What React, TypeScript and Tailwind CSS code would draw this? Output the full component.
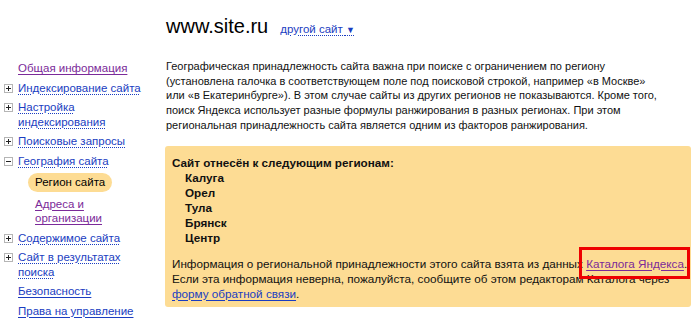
import React from "react";

type NavItem = {
  label: React.ReactNode;
  toggle?: "plus" | "minus";
  dotted?: boolean;
  visited?: boolean;
};

const nav: NavItem[] = [
  { label: "Общая информация", visited: true },
  { label: "Индексирование сайта", toggle: "plus", dotted: true },
  { label: <>Настройка<br />индексирования</>, toggle: "plus", dotted: true },
  { label: "Поисковые запросы", toggle: "plus", dotted: true },
  { label: "География сайта", toggle: "minus", dotted: true },
];

const navTail: NavItem[] = [
  { label: "Содержимое сайта", toggle: "plus", dotted: true },
  { label: <>Сайт в результатах<br />поиска</>, toggle: "plus", dotted: true },
  { label: "Безопасность" },
  { label: "Права на управление" },
];

const regions = ["Калуга", "Орел", "Тула", "Брянск", "Центр"];

const Toggle = ({ kind }: { kind: "plus" | "minus" }) => (
  <svg width="9" height="9" viewBox="0 0 9 9" className="shrink-0">
    <rect x="0.5" y="0.5" width="8" height="8" fill="#fff" stroke="#b5b5b5" />
    <path d="M2 4.5h5" stroke="#222" strokeWidth="1" />
    {kind === "plus" && <path d="M4.5 2v5" stroke="#222" strokeWidth="1" />}
  </svg>
);

const NavRow = ({ item }: { item: NavItem }) => (
  <li className="flex items-start">
    <span className="w-[14px] pt-[3px] flex">
      {item.toggle && <Toggle kind={item.toggle} />}
    </span>
    <a
      className={
        item.visited
          ? "text-[#7b2a99] underline underline-offset-2 decoration-1"
          : item.dotted
          ? "text-[#1a3dc1] underline decoration-dotted underline-offset-2 decoration-1"
          : "text-[#1a3dc1] underline underline-offset-2 decoration-1"
      }
    >
      {item.label}
    </a>
  </li>
);

export default function App() {
  return (
    <div className="w-[700px] h-[332px] bg-white overflow-hidden leading-[14.7px] text-[#111] font-['Liberation_Sans',Arial,sans-serif]">
      <div className="flex">
        {/* sidebar */}
        <ul className="w-[166px] shrink-0 pl-[4px] pt-[61px] flex flex-col gap-[5px] text-[11.5px] leading-[14.5px]">
          {nav.map((item, i) => (
            <NavRow key={i} item={item} />
          ))}
          <li className="pl-[24px]">
            <span className="inline-block bg-[#fddc94] rounded-full px-[7px] py-[2px] text-black">Регион сайта</span>
          </li>
          <li className="pl-[31px]">
            <a className="text-[#7b2a99] underline underline-offset-2 decoration-1">
              Адреса и<br />организации
            </a>
          </li>
          {navTail.map((item, i) => (
            <NavRow key={i} item={item} />
          ))}
        </ul>

        {/* main */}
        <div className="w-[524px] shrink-0">
          <div className="flex items-baseline gap-[12px] pt-[14px] h-[59px]">
            <h1 className="text-[20px] leading-[24px] text-black">www.site.ru</h1>
            <a className="text-[#1a3dc1] text-[11.5px] underline decoration-dotted underline-offset-2">
              другой сайт <span className="text-[9px] no-underline">▼</span>
            </a>
          </div>

          <p className="text-[11px]">
            Географическая принадлежность сайта важна при поиске с ограничением по региону<br />
            (установлена галочка в соответствующем поле под поисковой строкой, например «в Москве»<br />
            или «в Екатеринбурге»). В этом случае сайты из других регионов не показываются. Кроме того,<br />
            поиск Яндекса использует разные формулы ранжирования в разных регионах. При этом<br />
            региональная принадлежность сайта является одним из факторов ранжирования.
          </p>

          <div className="mt-[13px] -ml-[1px] w-[526px] bg-[#fddc94] rounded-[3px] pl-[7px] pt-[9px] pb-[6px] text-[11.7px] leading-[15px]">
            <div className="font-bold">Сайт отнесён к следующим регионам:</div>
            <ul className="pl-[13px] font-bold">
              {regions.map((r) => (
                <li key={r}>{r}</li>
              ))}
            </ul>
            <p className="mt-[11px]">
              Информация о региональной принадлежности этого сайта взята из данных{" "}
              <span className="relative">
                <a className="text-[#7b2a99] underline underline-offset-2">Каталога Яндекса</a>
                <span className="absolute left-[-7px] top-[-10px] w-[111px] h-[32px] border-[3px] border-[#ee0000]" />
              </span>
              .<br />
              Если эта информация неверна, пожалуйста, сообщите об этом редакторам Каталога через<br />
              <a className="text-[#1a3dc1] underline underline-offset-2">форму обратной связи</a>.
            </p>
          </div>
        </div>
      </div>
    </div>
  );
}
